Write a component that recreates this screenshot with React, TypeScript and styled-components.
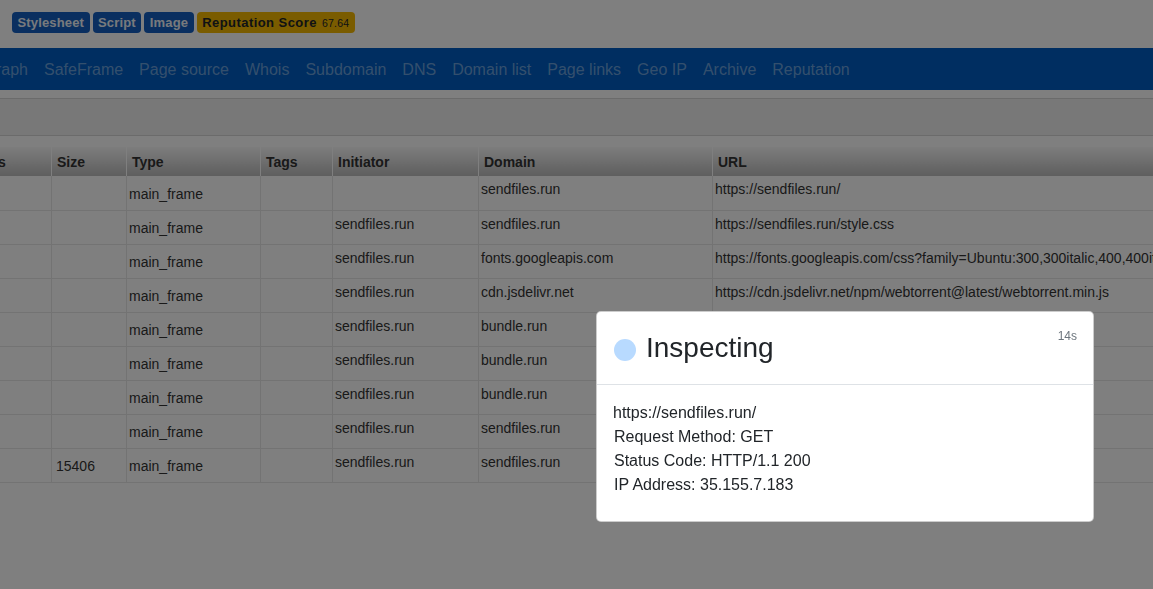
import React from 'react';
import styled, { createGlobalStyle } from 'styled-components';

const Global = createGlobalStyle`
  html, body { margin: 0; padding: 0; background: #ffffff; overflow: hidden; }
  body { font-family: "Liberation Sans", Arial, sans-serif; color: #333; }
  #root { width: 1153px; height: 589px; position: relative; overflow: hidden; }
`;

const Page = styled.div`
  width: 1153px;
  height: 589px;
  overflow: hidden;
  display: flex;
  flex-direction: column;
`;

const BadgeRow = styled.div`
  display: flex;
  align-items: flex-start;
  gap: 3px;
  height: 48px;
  box-sizing: border-box;
  padding: 12px 12px 0;
`;

const Badge = styled.span<{ $tone: 'blue' | 'yellow' }>`
  display: inline-flex;
  align-items: center;
  gap: 5px;
  height: 21px;
  padding: 0 5.5px;
  border-radius: 4px;
  font-size: 13px;
  font-weight: 700;
  letter-spacing: ${(p) => (p.$tone === 'blue' ? '0.15px' : '0.45px')};
  white-space: nowrap;
  background: ${(p) => (p.$tone === 'blue' ? '#145fc0' : '#f5b800')};
  color: ${(p) => (p.$tone === 'blue' ? '#f0f4fa' : '#212529')};
`;

const Score = styled.span`
  font-size: 10.5px;
  font-weight: 400;
  letter-spacing: 0.2px;
`;

const NavBar = styled.nav`
  height: 42px;
  background: #005cc2;
  display: flex;
  align-items: center;
  overflow: hidden;
  flex-shrink: 0;
`;

const NavList = styled.div`
  display: flex;
  margin-left: -24.5px;
  margin-top: 2px;
  white-space: nowrap;
`;

const NavItem = styled.span`
  padding: 0 8px;
  font-size: 16px;
  line-height: 20px;
  color: rgba(255, 255, 255, 0.42);
`;

const Toolbar = styled.div`
  margin-top: 8px;
  height: 36px;
  background: #f0f0f0;
  border-top: 1px solid #d6d6d6;
  border-bottom: 1px solid #d6d6d6;
  flex-shrink: 0;
`;

const TableWrap = styled.div`
  margin-top: 11px;
  overflow: hidden;
`;

const Table = styled.table`
  margin-left: -43px;
  border-collapse: collapse;
  table-layout: fixed;
  width: 1450px;
  font-size: 14px;
  white-space: nowrap;
`;

const HeadCell = styled.th<{ $w: number }>`
  width: ${(p) => p.$w}px;
  height: 29px;
  box-sizing: border-box;
  padding: 0 5px;
  text-align: left;
  font-weight: 700;
  color: #333;
  background: linear-gradient(#fafafa, #bdbdbd);
  border-left: 1px solid #ffffff;
  vertical-align: middle;
`;

const Row = styled.tr`
  height: 34px;
  border-bottom: 1px solid #e6e6e6;
`;

const Cell = styled.td<{ $mid?: boolean }>`
  padding: 5px 2px 3px;
  line-height: 16px;
  color: #333;
  border-left: 1px solid #e6e6e6;
  vertical-align: ${(p) => (p.$mid ? 'middle' : 'top')};
  overflow: hidden;
`;

const SizeCell = styled(Cell)`
  padding-left: 4px;
`;

const Backdrop = styled.div`
  position: fixed;
  inset: 0;
  background: rgba(0, 0, 0, 0.5);
`;

const Modal = styled.div`
  position: fixed;
  left: 596px;
  top: 311px;
  width: 498px;
  box-sizing: border-box;
  background: #ffffff;
  border: 1px solid rgba(0, 0, 0, 0.2);
  border-radius: 5px;
  color: #212529;
`;

const ModalHeader = styled.div`
  display: flex;
  align-items: flex-start;
  justify-content: space-between;
  padding: 16px 16px 16px 17px;
  border-bottom: 1px solid #dee2e6;
`;

const Title = styled.div`
  display: flex;
  align-items: center;
  gap: 10px;
  font-size: 28px;
  line-height: 40px;
`;

const Dot = styled.span`
  width: 22px;
  height: 22px;
  border-radius: 50%;
  background: #b8daff;
  margin-top: 4px;
`;

const Elapsed = styled.span`
  font-size: 12px;
  line-height: 16px;
  color: #6c757d;
`;

const ModalBody = styled.div`
  padding: 16px 16px 24px 16px;
  font-size: 16px;
  line-height: 24px;
`;

const Line = styled.div<{ $indent?: boolean }>`
  padding-left: ${(p) => (p.$indent ? '1px' : '0')};
`;

const navItems = ['Graph', 'SafeFrame', 'Page source', 'Whois', 'Subdomain', 'DNS', 'Domain list', 'Page links', 'Geo IP', 'Archive', 'Reputation'];

const cols: [string, number][] = [
  ['Status', 94],
  ['Size', 75],
  ['Type', 134],
  ['Tags', 72],
  ['Initiator', 146],
  ['Domain', 234],
  ['URL', 695],
];

type R = { size?: string; initiator: string; domain: string; url: string };
const rows: R[] = [
  { initiator: '', domain: 'sendfiles.run', url: 'https://sendfiles.run/' },
  { initiator: 'sendfiles.run', domain: 'sendfiles.run', url: 'https://sendfiles.run/style.css' },
  { initiator: 'sendfiles.run', domain: 'fonts.googleapis.com', url: 'https://fonts.googleapis.com/css?family=Ubuntu:300,300italic,400,400italic,500,500italic,700,700italic' },
  { initiator: 'sendfiles.run', domain: 'cdn.jsdelivr.net', url: 'https://cdn.jsdelivr.net/npm/webtorrent@latest/webtorrent.min.js' },
  { initiator: 'sendfiles.run', domain: 'bundle.run', url: 'https://bundle.run/buffer@5.4.3' },
  { initiator: 'sendfiles.run', domain: 'bundle.run', url: 'https://bundle.run/path@0.12.7' },
  { initiator: 'sendfiles.run', domain: 'bundle.run', url: 'https://bundle.run/stream@0.0.2' },
  { initiator: 'sendfiles.run', domain: 'sendfiles.run', url: 'https://sendfiles.run/app.js' },
  { size: '15406', initiator: 'sendfiles.run', domain: 'sendfiles.run', url: 'https://sendfiles.run/favicon.ico' },
];

export default function App() {
  return (
    <>
      <Global />
      <Page>
        <BadgeRow>
          <Badge $tone="blue">Stylesheet</Badge>
          <Badge $tone="blue">Script</Badge>
          <Badge $tone="blue">Image</Badge>
          <Badge $tone="yellow">
            Reputation Score <Score>67.64</Score>
          </Badge>
        </BadgeRow>
        <NavBar>
          <NavList>
            {navItems.map((n) => (
              <NavItem key={n}>{n}</NavItem>
            ))}
          </NavList>
        </NavBar>
        <Toolbar />
        <TableWrap>
          <Table>
            <thead>
              <tr>
                {cols.map(([c, w]) => (
                  <HeadCell key={c} $w={w}>{c}</HeadCell>
                ))}
              </tr>
            </thead>
            <tbody>
              {rows.map((r, i) => (
                <Row key={i}>
                  <Cell $mid />
                  <SizeCell $mid>{r.size ?? ''}</SizeCell>
                  <Cell $mid>main_frame</Cell>
                  <Cell $mid />
                  <Cell>{r.initiator}</Cell>
                  <Cell>{r.domain}</Cell>
                  <Cell>{r.url}</Cell>
                </Row>
              ))}
            </tbody>
          </Table>
        </TableWrap>
      </Page>
      <Backdrop />
      <Modal>
        <ModalHeader>
          <Title>
            <Dot />
            Inspecting
          </Title>
          <Elapsed>14s</Elapsed>
        </ModalHeader>
        <ModalBody>
          <Line>https://sendfiles.run/</Line>
          <Line $indent>Request Method: GET</Line>
          <Line $indent>Status Code: HTTP/1.1 200</Line>
          <Line $indent>IP Address: 35.155.7.183</Line>
        </ModalBody>
      </Modal>
    </>
  );
}
